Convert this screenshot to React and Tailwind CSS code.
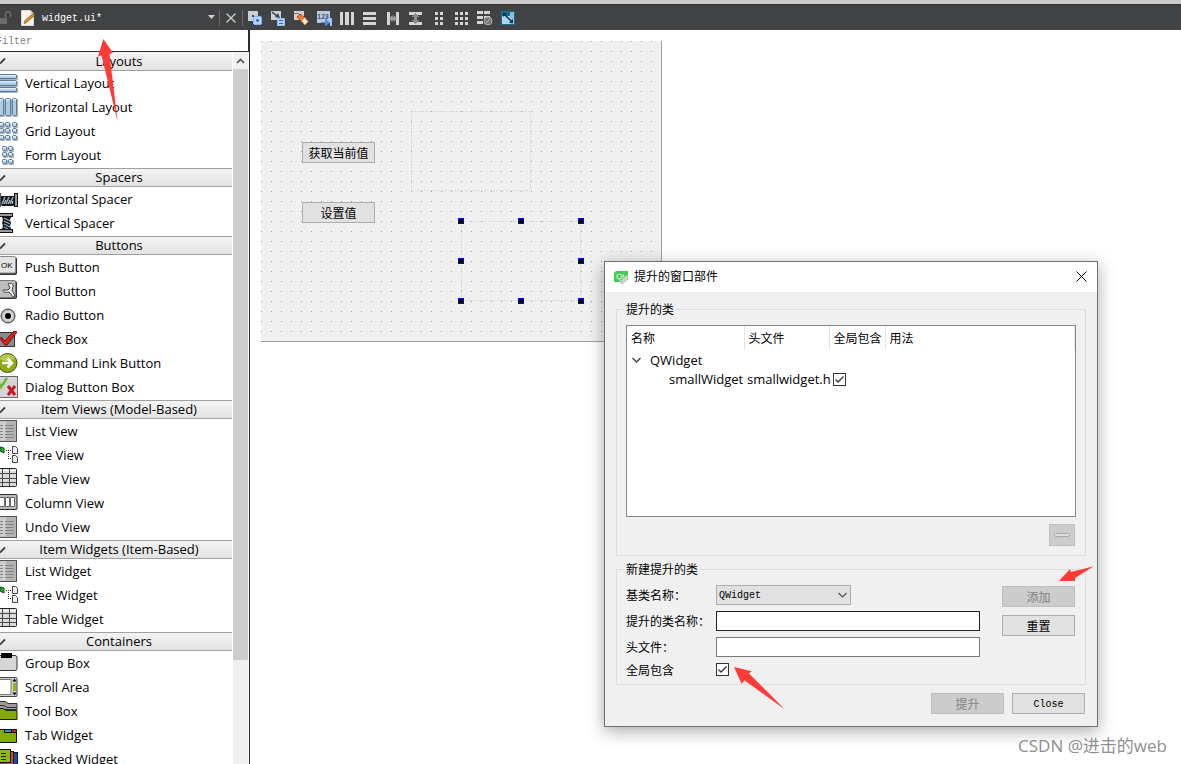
import React, { useState } from "react"

const mono = "font-['Liberation_Mono','Noto_Sans_CJK_SC',monospace]"

/* ---------- Widget box icons, the left edge of each is scrolled out ---------- */

const Cells = ({ list }) => (
    <g fill="#a9cbe6" stroke="#5b7896">
        {list.map(([x, y, w, h]) => (
            <React.Fragment key={`${x}-${y}`}>
                <rect x={x + 1} y={y + 1} width={w} height={h} rx="1" fill="#a9b2bb" stroke="none" />
                <rect x={x + 0.5} y={y + 0.5} width={w - 1} height={h - 1} rx="1" />
                <rect x={x + 1} y={y + 1} width={w - 2} height="1.5" fill="#dcedfa" stroke="none" />
            </React.Fragment>
        ))}
    </g>
)

const ListGlyph = () => (
    <g>
        <rect x="-4" y="0.5" width="20.5" height="21" fill="#b4b4b4" stroke="#555" />
        <rect x="-3" y="1.5" width="9" height="19" fill="#cfcfcf" />
        <path d="M0 5.5h3M0 8.5h3M0 11.5h3M0 14.5h3M0 17.5h3M5 5.5h9M5 8.5h9M5 11.5h9M5 14.5h9M5 17.5h9" stroke="#858585" />
    </g>
)

const TreeGlyph = () => (
    <g>
        <path d="M0 3l4 1v5l-4 -2z" fill="#2aa82f" stroke="#0c4d12" />
        <path d="M6 6.5h6M8.5 6v9M8 14.5h4" stroke="#333" strokeDasharray="1 1" />
        <path d="M12.5 2.5h3l2 2v5h-5z" fill="#f2f2f2" stroke="#444" />
        <path d="M12.5 11.5h3l2 2v5h-5z" fill="#f2f2f2" stroke="#444" />
    </g>
)

const TableGlyph = () => (
    <g>
        <rect x="-4" y="0.5" width="20.5" height="18" rx="1" fill="#d9d9d9" stroke="#2a2a2a" />
        <path d="M-3 2.5h19" stroke="#fff" />
        <path d="M-3 5.5h19M-3 10.5h19M-3 14.5h19M2.5 1v17M9.5 1v17" stroke="#4a4a4a" />
    </g>
)

const icons = {
    vertical: <Cells list={[[-3, 2, 20, 5], [-3, 8, 20, 6], [-3, 15, 20, 5]]} />,
    horizontal: <Cells list={[[-2, 2, 6, 18], [5, 2, 6, 18], [12, 2, 5, 18]]} />,
    grid: <Cells list={[[-1, 2, 5, 5], [5, 2, 5, 5], [12, 2, 5, 5], [-1, 8, 5, 5], [5, 8, 5, 5], [12, 8, 5, 5], [-1, 15, 5, 5], [5, 15, 5, 5], [12, 15, 5, 5]]} />,
    form: <Cells list={[[2, 2, 5, 5], [8, 2, 5, 5], [2, 8, 5, 5], [8, 8, 5, 5], [2, 15, 5, 5], [8, 15, 5, 5]]} />,
    hspacer: (
        <g>
            <path d="M0 5v14" stroke="#555" strokeWidth="2" />
            <path d="M1 8h14v9l-2 1h-11l-1 -1z" fill="#161616" />
            <path d="M2 16l3 -7M6 16l3 -7M10 16l3 -7" stroke="#8fb0c8" strokeWidth="1.5" />
            <path d="M4 16l2 -4M8 16l2 -4M12 16l1 -3" stroke="#e2edf4" />
            <rect x="14.5" y="5.5" width="3" height="13" fill="#9a9a9a" stroke="#111" />
        </g>
    ),
    vspacer: (
        <g>
            <path d="M2 5h9l-1 3l1 3l-1 3l1 3h-9l1 -3l-1 -3l1 -3z" fill="#161616" />
            <path d="M4 6l6 3M4 9l6 3M4 12l6 3M4 15l4 2" stroke="#8fb0c8" strokeWidth="1.3" />
            <rect x="-1" y="1.5" width="13.5" height="3" fill="#9a9a9a" stroke="#111" />
            <rect x="-1" y="17.5" width="13.5" height="3" fill="#9a9a9a" stroke="#111" />
        </g>
    ),
    push: (
        <g>
            <rect x="-3" y="1" width="20" height="18" rx="2" fill="#333" />
            <rect x="-3" y="0.5" width="18.5" height="16.5" rx="1" fill="#e4e4e4" stroke="#888" />
            <text x="1" y="12" fontSize="8" fontFamily="Liberation Sans" fill="#000">OK</text>
        </g>
    ),
    tool: (
        <g>
            <rect x="-3" y="1" width="20" height="18" rx="2" fill="#333" />
            <rect x="-3" y="0.5" width="18.5" height="17" rx="1" fill="#bdbdbd" stroke="#777" />
            <path d="M8 4c3 -2 6 0 5 3l-1 3l3 6l-2 1l-4 -5c-3 1 -6 0 -6 -2l5 0l2 -2z" fill="#ececec" stroke="#444" />
        </g>
    ),
    radio: (
        <g>
            <circle cx="8" cy="12" r="7" fill="#bcbcbc" stroke="#3a3a3a" />
            <circle cx="8" cy="12" r="5" fill="#d9d9d9" />
            <circle cx="8" cy="12" r="3" fill="#000" />
        </g>
    ),
    check: (
        <g>
            <rect x="-3" y="4.5" width="17.5" height="14" fill="#8a8a8a" stroke="#333" />
            <path d="M1 9l4 4l9 -10l3 1l-10 13h-2l-4 -5z" fill="#e0201c" stroke="#7c0f0c" />
        </g>
    ),
    command: (
        <g>
            <circle cx="7.5" cy="11" r="9.5" fill="#8fa818" stroke="#46560a" />
            <path d="M0 6c4 -5 11 -5 15 0c-4 4 -11 4 -15 1z" fill="#b7c957" />
            <path d="M2 11h9M7.5 6.5l4.5 4.5l-4.5 4.5" fill="none" stroke="#fff" strokeWidth="2.5" />
        </g>
    ),
    dialog: (
        <g>
            <rect x="-3" y="0.5" width="20.5" height="21" fill="#d4d4d4" stroke="#6b6b6b" />
            <path d="M-1 7l2 4l6 -9" fill="none" stroke="#67b832" strokeWidth="2.5" />
            <path d="M8 10l7 9M15 10l-7 9" stroke="#c41c22" strokeWidth="3" />
        </g>
    ),
    list: <ListGlyph />,
    tree: <TreeGlyph />,
    table: <TableGlyph />,
    column: (
        <g>
            <rect x="-3" y="2.5" width="20" height="15" rx="1" fill="#bbb" stroke="#2a2a2a" />
            <path d="M-0.5 5.5h5v9h-5zM5.5 5.5h4v9h-4zM10.5 5.5h4v9h-4z" fill="#fff" stroke="#666" />
        </g>
    ),
    group: (
        <g>
            <rect x="-3" y="3.5" width="20" height="15" rx="2" fill="#d6d6d6" stroke="#333" />
            <rect x="1" y="1" width="11" height="5" fill="#000" />
        </g>
    ),
    scroll: (
        <g>
            <rect x="-3" y="1.5" width="20" height="19" rx="1" fill="#d0d0d0" stroke="#444" />
            <rect x="-2" y="3.5" width="13" height="15" fill="#fff" stroke="#777" />
            <rect x="13" y="7" width="3" height="8" fill="#8db514" />
            <path d="M12.5 5.5l2 -3l2 3zM12.5 16.5l2 3l2 -3z" fill="#000" />
        </g>
    ),
    toolbox: (
        <g>
            <path d="M-2 1.5h7l3 2h9v6h-19z" fill="#9b9b9b" stroke="#333" />
            <path d="M-2 5.5h6l3 2h10" fill="none" stroke="#333" />
            <path d="M-2 8.5h5l3 2h11v9h-19z" fill="#82ab0b" stroke="#1c2500" />
        </g>
    ),
    tab: (
        <g>
            <path d="M-2 5.5h18.5v13h-18.5z" fill="#82ab0b" stroke="#111" />
            <path d="M4 5h13v4h-13z" fill="#111" />
            <path d="M5 6h6v2h-6z" fill="#2f8fe0" />
            <path d="M12 6h4v2h-4z" fill="#d82020" />
        </g>
    ),
    stacked: (
        <g>
            <rect x="3" y="4.5" width="14.5" height="18" fill="#1d49b4" stroke="#0a1740" />
            <rect x="0" y="3.5" width="13.5" height="18" fill="#c2521b" stroke="#431800" />
            <rect x="-3" y="1.5" width="13.5" height="13" fill="#8fb81a" stroke="#111" />
            <path d="M1 5.5h5M1 8.5h5M1 11.5h5" stroke="#1c2500" />
        </g>
    ),
}

const sections = [
    { title: "Layouts", items: [["vertical", "Vertical Layout"], ["horizontal", "Horizontal Layout"], ["grid", "Grid Layout"], ["form", "Form Layout"]] },
    { title: "Spacers", items: [["hspacer", "Horizontal Spacer"], ["vspacer", "Vertical Spacer"]] },
    { title: "Buttons", items: [["push", "Push Button"], ["tool", "Tool Button"], ["radio", "Radio Button"], ["check", "Check Box"], ["command", "Command Link Button"], ["dialog", "Dialog Button Box"]] },
    { title: "Item Views (Model-Based)", items: [["list", "List View"], ["tree", "Tree View"], ["table", "Table View"], ["column", "Column View"], ["list", "Undo View"]] },
    { title: "Item Widgets (Item-Based)", items: [["list", "List Widget"], ["tree", "Tree Widget"], ["table", "Table Widget"]] },
    { title: "Containers", items: [["group", "Group Box"], ["scroll", "Scroll Area"], ["toolbox", "Tool Box"], ["tab", "Tab Widget"], ["stacked", "Stacked Widget"]] },
]

/* ---------- Toolbar ---------- */

const light = "#d6d6d6"

const tools = [
    ["Edit Widgets", <g><rect x="1" y="1" width="10" height="10" fill="#cfcfcf" /><rect x="6.5" y="6.5" width="8" height="8" fill="#b5d3fa" stroke="#8db8f0" /><path d="M5 5h2v2h-2zM14 5h2v2h-2zM5 14h2v2h-2zM14 14h2v2h-2z" fill="#1d4da0" /><circle cx="10.5" cy="10.5" r="1.3" fill="#1d4da0" /></g>],
    ["Edit Signals/Slots", <g><rect x="1" y="1" width="10" height="9" fill="#cfcfcf" /><rect x="7.5" y="8.5" width="7" height="7" fill="#b5d3fa" stroke="#8db8f0" /><path d="M9 10.5h4M9 13.5h4" stroke="#2f62b5" /><path d="M2 2l5 4" stroke="#333" strokeWidth="1.5" /><path d="M10 8l-5 -1l3 -4z" fill="#26466e" /></g>],
    ["Edit Buddies", <g><path d="M1 1h10v5l-4 4h-6z" fill="#cfcfcf" /><path d="M1 3.5h5" stroke="#777" /><path d="M4 7l3 -3l5 4l-3 4z" fill="#ee7b39" stroke="#b44a12" /><path d="M8.5 11l3 -3.5l3.5 4l-3 3.5z" fill="#fff3ea" stroke="#ee7b39" /></g>],
    ["Edit Tab Order", <g><rect x="1" y="1" width="13" height="12" fill="#c3c9d0" /><text x="1" y="9" fontSize="7" fontWeight="700" fontFamily="Liberation Sans" fill="#255ba5">123</text><path d="M5 12.5h6M9.5 9.5l4 3l-4 3z" fill="#4b8fe8" stroke="#4b8fe8" /><path d="M15 8v8" stroke="#9cc5fa" strokeWidth="2" /></g>],
    ["Lay Out Horizontally", <path d="M1 2h3v13h-3zM6 2h4v13h-4zM12 2h3v13h-3z" fill={light} />],
    ["Lay Out Vertically", <path d="M1 2h13v3h-13zM1 7h13v3h-13zM1 12h13v3h-13z" fill={light} />],
    ["Lay Out Horizontally in Splitter", <g fill={light}><path d="M2 2h3v13h-3zM11 2h3v13h-3z" /><path d="M4 8.5l3.5 -3.5v2h1v-2l3.5 3.5l-3.5 3.5v-2h-1v2z" fill="#9c9c9c" /></g>],
    ["Lay Out Vertically in Splitter", <g fill={light}><path d="M1 2h13v3h-13zM1 12h13v3h-13z" /><path d="M7.5 3l4 4h-2.5v3h2.5l-4 4l-4 -4h2.5v-3h-2.5z" fill="#8c8c8c" /></g>],
    ["Lay Out in a Form", <path d="M4 2h3v3h-3zM9 2h3v3h-3zM4 7h3v3h-3zM9 7h3v3h-3zM4 12h3v3h-3zM9 12h3v3h-3z" fill={light} />],
    ["Lay Out in a Grid", <path d="M1 2h3v3h-3zM6 2h3v3h-3zM11 2h3v3h-3zM1 7h3v3h-3zM6 7h3v3h-3zM11 7h3v3h-3zM1 12h3v3h-3zM6 12h3v3h-3zM11 12h3v3h-3z" fill={light} />],
    ["Break Layout", <g><path d="M0 1h6v3h-6zM7 1h6v3h-6zM0 6h6v3h-6zM7 6h6v3h-6zM0 11h6v3h-6z" fill={light} /><circle cx="11" cy="11" r="4" fill="#777" stroke="#a8a8a8" /><path d="M8.5 13.5l5 -5" stroke="#b8b8b8" /></g>],
    ["Adjust Size", <g><rect x="1" y="1" width="14" height="14" fill="#1c6a96" /><rect x="2" y="6" width="8" height="8" fill="#a9d7ec" /><path d="M10 2h4v12h-4z" fill="#8cc0d8" /><path d="M4 4l8 8" stroke="#0a3048" strokeWidth="1.3" /><path d="M3 3h4l-4 4zM13 13h-4l4 -4z" fill="#0a3048" /></g>],
]

const Toolbar = () => (
    <header className="w-full shrink-0">
        <div className="h-[4px] overflow-hidden bg-[#cbcbcb]"></div>
        <div className="h-[26px] flex items-center border-t border-[#2d2e30] bg-[#404244]">
            <div className="w-[243px] mr-1 shrink-0 flex items-center">
                <svg width="12" height="16" viewBox="0 0 12 16" fill="none">
                    <path d="M-1 8h8v6h-8z" fill="#6b6b6b" />
                    <path d="M5.5 8v-4c0 -3 5 -3 5 0v3" stroke="#6b6b6b" strokeWidth="1.5" />
                </svg>
                <svg className="ml-[9px]" width="14" height="16" viewBox="0 0 14 16">
                    <path d="M0.5 0.5h9l3 3v12h-12z" fill="#f7f4ec" stroke="#d8d8d8" />
                    <path d="M9.5 0.5l3 3h-3z" fill="#cfcabc" />
                    <path d="M3 13.5l1 -3l8 -7l1.5 2l-8 7z" fill="#dc8f35" stroke="#7f4c14" strokeWidth="0.7" />
                </svg>
                <button type="button" className="ml-[7px] flex-1 flex items-center justify-between pr-[3px]">
                    <span className={`pt-0.5 text-[10px] leading-4 text-white ${mono}`}>widget.ui*</span>
                    <svg width="9" height="5" viewBox="0 0 9 5"><path d="M1 0h7l-3.5 4z" fill="#d0d0d0" /></svg>
                </button>
                <div className="w-px h-4 bg-[#6a6a6a]"></div>
                <button type="button" aria-label="Close document" className="w-[22px] flex justify-center">
                    <svg width="10" height="10" viewBox="0 0 10 10"><path d="M0.5 0.5l9 9M9.5 0.5l-9 9" stroke="#cfcfcf" strokeWidth="1.3" /></svg>
                </button>
                <div className="w-px h-4 bg-[#6a6a6a]"></div>
            </div>
            <div className="flex items-center gap-[7px]">
                {tools.map(([name, glyph]) => (
                    <button type="button" key={name} aria-label={name}>
                        <svg className="block" width="16" height="16" viewBox="0 0 16 16">{glyph}</svg>
                    </button>
                ))}
            </div>
        </div>
    </header>
)

/* ---------- Widget box ---------- */

const WidgetBox = () => (
    <aside className="w-[250px] shrink-0 flex flex-col min-h-0 border-r border-[#2d2e30] bg-white">
        <input type="text" aria-label="Filter" placeholder="Filter" className={`h-[22px] w-full shrink-0 pt-0.5 -indent-1 text-[10px] border-r border-b border-[#2d2e30] bg-white placeholder:text-[#808080] outline-none ${mono}`} />
        <div className="flex flex-1 min-h-0 pr-px">
            <div className="flex-1 overflow-hidden pr-px">
                {sections.map((section, index) => (
                    <section key={section.title}>
                        <h2 className={`h-[19px] mb-px flex items-center border-b border-[#a0a0a0] bg-linear-to-b from-[#f4f4f4] to-[#e2e2e2] ${index > 0 ? "border-t" : ""}`}>
                            <svg width="6" height="8" viewBox="0 0 6 8"><path d="M0 6.5l5 -5" stroke="#404040" strokeWidth="1.8" /></svg>
                            <span className="flex-1 pb-px text-center text-[13px] leading-4">{section.title}</span>
                        </h2>
                        <ul>
                            {section.items.map(([icon, label]) => (
                                <li key={label} className="h-6 flex items-center gap-[7px]">
                                    <svg className="shrink-0" width="18" height="24" viewBox="0 0 18 24">{icons[icon]}</svg>
                                    <span className="pb-0.5 text-[13px] leading-4 whitespace-nowrap">{label}</span>
                                </li>
                            ))}
                        </ul>
                    </section>
                ))}
            </div>
            {/* Scroll bar */}
            <div className="w-[15px] flex flex-col bg-[#f0f0f0]">
                <button type="button" aria-label="Scroll up" className="h-[17px] shrink-0 flex items-center justify-center">
                    <svg width="9" height="6" viewBox="0 0 9 6" fill="none"><path d="M1 5l3.5 -3.5l3.5 3.5" stroke="#505050" strokeWidth="1.6" /></svg>
                </button>
                <div className="h-[83%] bg-[#cdcdcd]"></div>
            </div>
        </div>
    </aside>
)

/* ---------- Form canvas ---------- */

const PlainButton = ({ children, className = "", ...rest }) => (
    <button type="button" className={`w-[73px] h-[21px] pt-0.5 flex items-center justify-center border border-[#adadad] bg-[#e1e1e1] text-xs leading-4 disabled:border-[#bfbfbf] disabled:bg-[#cccccc] disabled:text-[#838383] ${className}`} {...rest}>{children}</button>
)

const handles = [[0, 0], [60, 0], [120, 0], [0, 40], [120, 40], [0, 80], [60, 80], [120, 80]]

const FormCanvas = () => (
    <div className="relative ml-[11px] mt-[11px] w-[401px] h-[301px] border-r border-b border-[#a0a0a0] bg-[#f0f0f0] bg-[conic-gradient(from_270deg_at_1px_1px,#a0a0a0_90deg,transparent_0)] bg-[size:10px_10px]">
        <PlainButton className="absolute left-[41px] top-[101px]">获取当前值</PlainButton>
        <PlainButton className="absolute left-[41px] top-[161px]">设置值</PlainButton>
        <svg className="absolute left-[150px] top-[70px]" width="120" height="80" viewBox="0 0 120 80">
            <rect x="0.5" y="0.5" width="119" height="79" fill="none" stroke="#c8c8c8" strokeDasharray="1 2" />
        </svg>
        <svg className="absolute left-[197px] top-[177px]" width="126" height="86" viewBox="0 0 126 86">
            <rect x="3.5" y="3.5" width="119" height="79" fill="none" stroke="#c8c8c8" strokeDasharray="1 2" />
            {handles.map(([x, y]) => (
                <rect key={`${x}-${y}`} x={x + 0.5} y={y + 0.5} width="5" height="5" fill="#000" stroke="#0000f0" />
            ))}
        </svg>
    </div>
)

/* ---------- Dialog ---------- */

const CheckBox = ({ id, label, checked, onChange }) => (
    <span className="relative block w-[13px] h-[13px]">
        <input id={id} type="checkbox" aria-label={label} checked={checked} onChange={onChange} className="block appearance-none w-[13px] h-[13px] border border-[#333] bg-white" />
        {checked && (
            <svg className="absolute left-0 top-0 pointer-events-none" width="13" height="13" viewBox="0 0 13 13" fill="none">
                <path d="M2.5 6.5l2.5 2.5l5.5 -5.5" stroke="#333" strokeWidth="1.3" />
            </svg>
        )}
    </span>
)

const PromoteDialog = () => {
    const [globalInclude, setGlobalInclude] = useState(true)
    const [rowInclude, setRowInclude] = useState(true)
    const [formData, setFormData] = useState({ className: "", header: "" })

    const handleInputFieldChange = (e) => {
        const { name, value } = e.target
        setFormData((prev) => ({ ...prev, [name]: value }))
    }

    return (
        <div role="dialog" aria-labelledby="dialog-title" className="absolute left-[604px] top-[261px] w-[494px] border border-[#707070] bg-[#f0f0f0] text-xs leading-4 shadow-[0_4px_16px_rgba(0,0,0,0.35)]">
            <div className="h-[30px] pl-2 pr-[10px] flex items-center bg-white">
                <svg width="16" height="16" viewBox="0 0 16 16">
                    <path d="M3 2h12v8l-3 3h-11v-9z" fill="#41cd52" />
                    <text x="3" y="10" fontSize="8" fontFamily="Liberation Sans" fill="#fff">Qt</text>
                    <path d="M15 6c0 5 -3 8 -7 9l0 -3c2 -3 4 -5 7 -6z" fill="#d2d2d2" stroke="#aaa" strokeWidth="0.5" />
                </svg>
                <h1 id="dialog-title" className="flex-1 pl-[5px] text-xs leading-4">提升的窗口部件</h1>
                <button type="button" aria-label="关闭" className="pb-0.5">
                    <svg className="block" width="11" height="11" viewBox="0 0 11 11"><path d="M0.5 0.5l10 10M10.5 0.5l-10 10" stroke="#000" /></svg>
                </button>
            </div>

            <div className="px-[11px] pt-2 pb-3">
                {/* Promoted classes */}
                <fieldset className="border border-[#dcdcdc] pl-[9px] pr-[9px] pb-[9px]">
                    <legend className="-ml-0.5 px-0.5 pt-0.5">提升的类</legend>
                    <div className="mt-[7px] h-48 border border-[#828790] bg-white">
                        <table className="w-full table-fixed border-collapse text-left">
                            <colgroup>
                                <col className="w-[117px]" />
                                <col className="w-[85px]" />
                                <col className="w-14" />
                                <col />
                            </colgroup>
                            <thead>
                                <tr className="h-6">
                                    <th className="pl-1 pt-0.5 font-normal border-r border-[#e5e5e5]">名称</th>
                                    <th className="pl-1 pt-0.5 font-normal border-r border-[#e5e5e5]">头文件</th>
                                    <th className="pl-1 pt-0.5 font-normal whitespace-nowrap border-r border-[#e5e5e5]">全局包含</th>
                                    <th className="pl-1 pt-0.5 font-normal border-r border-[#e5e5e5]">用法</th>
                                </tr>
                            </thead>
                            <tbody className="text-[13px]">
                                <tr className="h-[19px]">
                                    <td colSpan={4} className="pl-[5px]">
                                        <div className="flex items-center gap-[9px]">
                                            <svg width="9" height="6" viewBox="0 0 9 6" fill="none"><path d="M0.5 1l4 4l4 -4" stroke="#404040" strokeWidth="1.4" /></svg>
                                            QWidget
                                        </div>
                                    </td>
                                </tr>
                                <tr className="h-5">
                                    <td className="pl-[42px] whitespace-nowrap">smallWidget</td>
                                    <td className="pl-[3px] whitespace-nowrap">smallwidget.h</td>
                                    <td className="pl-1"><CheckBox label="全局包含 smallWidget" checked={rowInclude} onChange={() => setRowInclude((prev) => !prev)} /></td>
                                    <td></td>
                                </tr>
                            </tbody>
                        </table>
                    </div>
                    <div className="mt-[7px] pr-px flex justify-end">
                        <button type="button" disabled aria-label="移除" className="w-[26px] h-[22px] flex items-center justify-center border border-[#bfbfbf] bg-[#cccccc]">
                            <svg width="16" height="4" viewBox="0 0 16 4"><rect x="0.5" y="0.5" width="15" height="3" rx="1" fill="#dedede" stroke="#a8a8a8" /></svg>
                        </button>
                    </div>
                </fieldset>

                {/* New promoted class */}
                <fieldset className="mt-1 border border-[#dcdcdc] pl-[9px] pr-[10px] pb-2">
                    <legend className="-ml-0.5 px-0.5 pt-0.5">新建提升的类</legend>
                    <div className="pt-[7px] flex gap-[22px]">
                        <div className="flex-1 grid grid-cols-[90px_1fr] gap-y-1.5 items-center">
                            <label htmlFor="base-class" className="pt-0.5 whitespace-nowrap">基类名称：</label>
                            <div className="relative w-[135px]">
                                <select id="base-class" className={`block appearance-none w-full h-5 pt-0.5 pl-0.5 border border-[#adadad] bg-[#e1e1e1] text-[10px] ${mono}`}>
                                    <option>QWidget</option>
                                </select>
                                <svg className="absolute right-1 top-[7px] pointer-events-none" width="9" height="6" viewBox="0 0 9 6" fill="none"><path d="M0.5 1l4 4l4 -4" stroke="#505050" strokeWidth="1.2" /></svg>
                            </div>
                            <label htmlFor="class-name" className="pt-0.5 whitespace-nowrap">提升的类名称：</label>
                            <input id="class-name" name="className" type="text" value={formData.className} onChange={handleInputFieldChange} className="w-full h-5 px-1 border border-[#222] bg-white outline-none" />
                            <label htmlFor="header-file" className="pt-0.5">头文件：</label>
                            <input id="header-file" name="header" type="text" value={formData.header} onChange={handleInputFieldChange} className="w-full h-5 px-1 border border-[#7a7a7a] bg-white outline-none" />
                            <label htmlFor="global-include" className="h-[13px] leading-4">全局包含</label>
                            <CheckBox id="global-include" checked={globalInclude} onChange={() => setGlobalInclude((prev) => !prev)} />
                        </div>
                        <div className="pt-px flex flex-col gap-2">
                            <PlainButton disabled>添加</PlainButton>
                            <PlainButton>重置</PlainButton>
                        </div>
                    </div>
                </fieldset>

                {/* Button action */}
                <div className="mt-2 pr-px flex justify-end gap-2">
                    <PlainButton disabled>提升</PlainButton>
                    <PlainButton><span className={`text-[10px] ${mono}`}>Close</span></PlainButton>
                </div>
            </div>
        </div>
    )
}

const Arrows = () => (
    <svg className="absolute left-0 top-0 pointer-events-none" width="1181" height="764" viewBox="0 0 1181 764" fill="#ff3b38">
        <path d="M103.3 39L98 56.5L101.5 55.5L117.7 122L109.5 54L113 52.7Z" />
        <path d="M734 667L751.7 671.3L749 673.5L785 709.5L744.3 680.3L741.7 684Z" />
        <path d="M1059 581L1069.7 569.3L1071 572L1093.7 566.3L1075 578L1075 581Z" />
    </svg>
)

const App = () => {
    return (
        <div className="relative w-full h-screen overflow-hidden flex flex-col bg-white text-black font-['Open_Sans','Noto_Sans_CJK_SC',sans-serif]">
            <Toolbar />
            <div className="flex-1 flex min-h-0">
                <WidgetBox />
                <main className="flex-1 min-w-0">
                    <FormCanvas />
                </main>
            </div>
            <PromoteDialog />
            <p className="absolute right-[14px] bottom-[6px] text-[17px] leading-6 text-[#8f8f8f]">CSDN @进击的web</p>
            <Arrows />
        </div>
    )
}

export default App
